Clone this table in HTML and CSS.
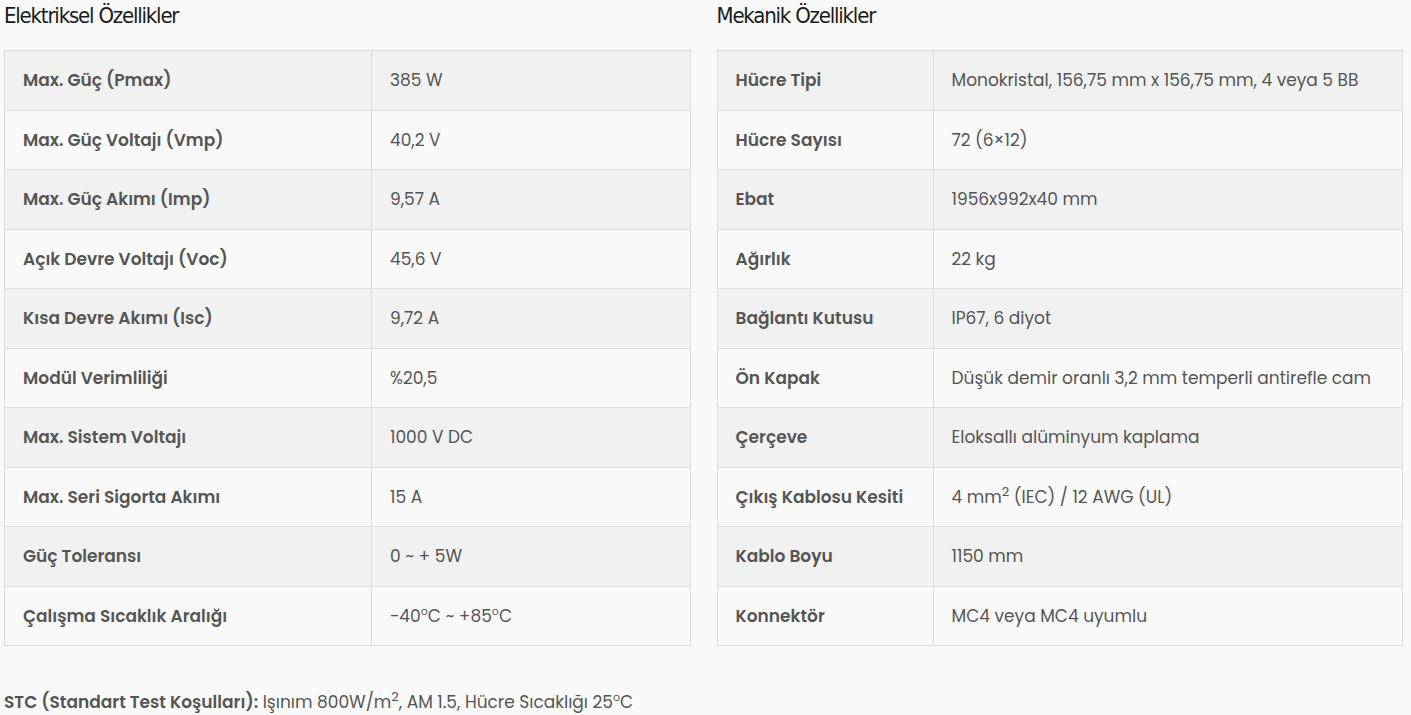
FILE: index.html
```html
<!DOCTYPE html>
<html lang="tr">
<head>
<meta charset="utf-8">
<title>Özellikler</title>
<link rel="stylesheet" href="styles.css">
</head>
<body>
<div class="page">
  <div class="cols">
    <section class="col">
      <h3 class="title">Elektriksel Özellikler</h3>
      <table class="spec spec-left">
        <tr><th>Max. Güç (Pmax)</th><td>385 W</td></tr>
        <tr><th>Max. Güç Voltajı (Vmp)</th><td>40,2 V</td></tr>
        <tr><th>Max. Güç Akımı (Imp)</th><td>9,57 A</td></tr>
        <tr><th>Açık Devre Voltajı (Voc)</th><td>45,6 V</td></tr>
        <tr><th>Kısa Devre Akımı (Isc)</th><td>9,72 A</td></tr>
        <tr><th>Modül Verimliliği</th><td>%20,5</td></tr>
        <tr><th>Max. Sistem Voltajı</th><td>1000 V DC</td></tr>
        <tr><th>Max. Seri Sigorta Akımı</th><td>15 A</td></tr>
        <tr><th>Güç Toleransı</th><td>0 ~ + 5W</td></tr>
        <tr><th>Çalışma Sıcaklık Aralığı</th><td>-40<sup>o</sup>C ~ +85<sup>o</sup>C</td></tr>
      </table>
    </section>
    <section class="col">
      <h3 class="title">Mekanik Özellikler</h3>
      <table class="spec spec-right">
        <tr><th>Hücre Tipi</th><td>Monokristal, 156,75 mm x 156,75 mm, 4 veya 5 BB</td></tr>
        <tr><th>Hücre Sayısı</th><td>72 (6×12)</td></tr>
        <tr><th>Ebat</th><td>1956x992x40 mm</td></tr>
        <tr><th>Ağırlık</th><td>22 kg</td></tr>
        <tr><th>Bağlantı Kutusu</th><td>IP67, 6 diyot</td></tr>
        <tr><th>Ön Kapak</th><td>Düşük demir oranlı 3,2 mm temperli antirefle cam</td></tr>
        <tr><th>Çerçeve</th><td>Eloksallı alüminyum kaplama</td></tr>
        <tr><th>Çıkış Kablosu Kesiti</th><td>4 mm<sup class="big">2</sup> (IEC) / 12 AWG (UL)</td></tr>
        <tr><th>Kablo Boyu</th><td>1150 mm</td></tr>
        <tr><th>Konnektör</th><td>MC4 veya MC4 uyumlu</td></tr>
      </table>
    </section>
  </div>
  <p class="note"><strong>STC (Standart Test Koşulları):</strong> Işınım 800W/m<sup class="big">2</sup>, AM 1.5, Hücre Sıcaklığı 25<sup>o</sup>C</p>
</div>
</body>
</html>
```

FILE: styles.css
```css
html, body {
  margin: 0;
  padding: 0;
  background: #f9f9f9;
}
body {
  font-family: "Poppins", "Open Sans", "Noto Sans", sans-serif;
  color: #555;
  font-size: 17px;
}
.page {
  padding: 0 8px 0 4px;
}
.cols {
  display: grid;
  grid-template-columns: 1fr 1fr;
  column-gap: 26px;
}
.title {
  margin: 0 0 18px;
  font-family: "DejaVu Sans Condensed", "Liberation Sans Narrow", sans-serif;
  font-weight: 400;
  font-size: 22px;
  line-height: 32px;
  color: #1a1a1a;
  letter-spacing: -1.2px;
}
.spec {
  width: 100%;
  border-collapse: collapse;
  table-layout: fixed;
}
.spec th, .spec td {
  border: 1px solid #ddd;
  padding: 17px 18px;
  line-height: 24.5px;
  text-align: left;
  vertical-align: middle;
  font-size: 17px;
  white-space: nowrap;
}
.spec th {
  font-weight: 600;
  color: #555;
}
.spec td {
  font-weight: 400;
  color: #555;
}
.spec tr:nth-child(odd) {
  background: #f1f1f1;
}
.spec-left th { width: 330px; }
.spec-right th { width: 179px; }
sup {
  font-size: 11px;
  line-height: 0;
  vertical-align: 7px;
}
sup.big {
  font-size: 13px;
  vertical-align: 7px;
}
.note {
  margin: 44px 0 0;
  line-height: 24px;
  font-size: 17px;
}
.note strong {
  font-weight: 600;
}
```
